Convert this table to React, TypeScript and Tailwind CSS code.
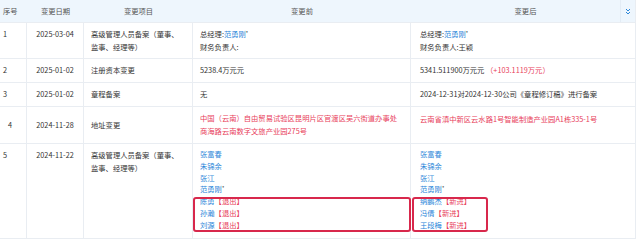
const BLUE = "text-[#2b86d9]";
const RED = "text-[#e8405b]";

const Name = ({ name, star }: { name: string; star?: boolean }) => (
	<span>
		<span className={BLUE}>{name}</span>
		{star && <span className="relative -top-[2px] text-[5px] text-[#333]">*</span>}
	</span>
);

const Cell = ({
	width,
	className = "",
	children,
}: {
	width: string;
	className?: string;
	children?: React.ReactNode;
}) => (
	<div className={`${width} shrink-0 border-r border-[#e9edf2] ${className}`}>{children}</div>
);

const Row = ({
	h,
	no,
	date,
	item,
	before,
	after,
	center,
	children,
}: {
	h: string;
	no: string;
	date: string;
	item: React.ReactNode;
	before: React.ReactNode;
	after: React.ReactNode;
	center?: boolean;
	children?: React.ReactNode;
}) => {
	const pos = center ? "flex items-center" : "pt-[5px]";
	return (
		<div className={`relative flex ${h} border-b border-[#e9edf2] leading-[13px] text-[#333]`}>
			<Cell width="w-[27px]" className={`${pos} pl-[3px]`}>
				<span className="w-[14px] text-center">{no}</span>
			</Cell>
			<Cell width="w-[57px]" className={`${pos} justify-center text-center`}>
				<span className="w-full">{date}</span>
			</Cell>
			<Cell width="w-[109px]" className={`${pos} pl-[7px]`}>
				<div>{item}</div>
			</Cell>
			<Cell width="w-[218px]" className={`${center ? "flex items-center" : "pt-[5px]"} pl-[7px]`}>
				<div>{before}</div>
			</Cell>
			<Cell width="w-[225px]" className="pt-[5px] pl-[9px]">
				{after}
			</Cell>
			{children}
		</div>
	);
};

const Members = ({ list, tag }: { list: string[]; tag: string }) => (
	<div className="leading-[11.8px]">
		<div><Name name="张富春" /></div>
		<div><Name name="朱锦余" /></div>
		<div><Name name="张江" /></div>
		<div><Name name="范勇刚" star /></div>
		{list.map((n) => (
			<div key={n}>
				<span className={BLUE}>{n}</span>
				<span className={RED}>【{tag}】</span>
			</div>
		))}
	</div>
);

const App = () => {
	const item = (
		<>
			<div>高级管理人员备案（董事、</div>
			<div>监事、经理等）</div>
		</>
	);

	return (
		<div
			className="h-[241px] w-[640px] overflow-hidden bg-white text-[7.3px]"
			style={{ fontFamily: '"Noto Sans CJK SC", "Noto Sans", sans-serif' }}>
			<div className="w-[636px] border-r border-[#e9edf2]">
				<div className="relative flex h-[23px] items-center border-b border-[#e9edf2] bg-[#eef6fd] text-[#555]">
					<div className="w-[27px] shrink-0 pl-[3px]">序号</div>
					<div className="w-[57px] shrink-0 text-center">变更日期</div>
					<div className="w-[109px] shrink-0 text-center">变更项目</div>
					<div className="w-[218px] shrink-0 text-center">变更前</div>
					<div className="w-[225px] shrink-0 pl-[4px] text-center">变更后</div>
					<div className="absolute right-0 top-0 flex h-full w-[15px] items-center justify-center border-l border-[#e3ecf5]">
						<svg width="6" height="7" viewBox="0 0 6 7" fill="none" stroke="#2b86d9" strokeWidth="1">
							<path d="M1 1 L3 3 L5 1 M1 4 L3 6 L5 4" />
						</svg>
					</div>
				</div>

				<Row
					h="h-[36px]"
					no="1"
					date="2025-03-04"
					item={item}
					before={
						<>
							<div>总经理:<Name name="范勇刚" star /></div>
							<div>财务负责人:</div>
						</>
					}
					after={
						<>
							<div>总经理:<Name name="范勇刚" star /></div>
							<div>财务负责人:王颖</div>
						</>
					}
				/>
				<Row
					h="h-[24px]"
					no="2"
					date="2025-01-02"
					item="注册资本变更"
					before="5238.4万元元"
					after={
						<div>
							5341.511900万元元 <span className={RED}>（+103.1119万元）</span>
						</div>
					}
				/>
				<Row
					h="h-[24px]"
					no="3"
					date="2025-01-02"
					item="章程备案"
					before="无"
					after="2024-12-31对2024-12-30公司《章程修订稿》进行备案"
				/>
				<Row
					h="h-[37px]"
					no="4"
					date="2024-11-28"
					item="地址变更"
					center
					before={
						<div className={RED}>
							<div>中国（云南）自由贸易试验区昆明片区官渡区吴六街道办事处</div>
							<div>商海路云南数字文旅产业园275号</div>
						</div>
					}
					after={<div className={`${RED} pt-[1px]`}>云南省滇中新区云水路1号智能制造产业园A1栋335-1号</div>}
				/>
				<Row
					h="h-[95px]"
					no="5"
					date="2024-11-22"
					item={item}
					before={<Members list={["陈勇", "孙瀚", "刘源"]} tag="退出" />}
					after={<Members list={["纳鹏杰", "冯倩", "王段梅"]} tag="新进" />}>
					<div className="absolute left-[193px] top-[53px] h-[35px] w-[218px] rounded-[3px] border-2 border-[#d8284c]" />
					<div className="absolute left-[412px] top-[53px] h-[35px] w-[76px] rounded-[3px] border-2 border-[#d8284c]" />
				</Row>
			</div>
		</div>
	);
};

export default App;
